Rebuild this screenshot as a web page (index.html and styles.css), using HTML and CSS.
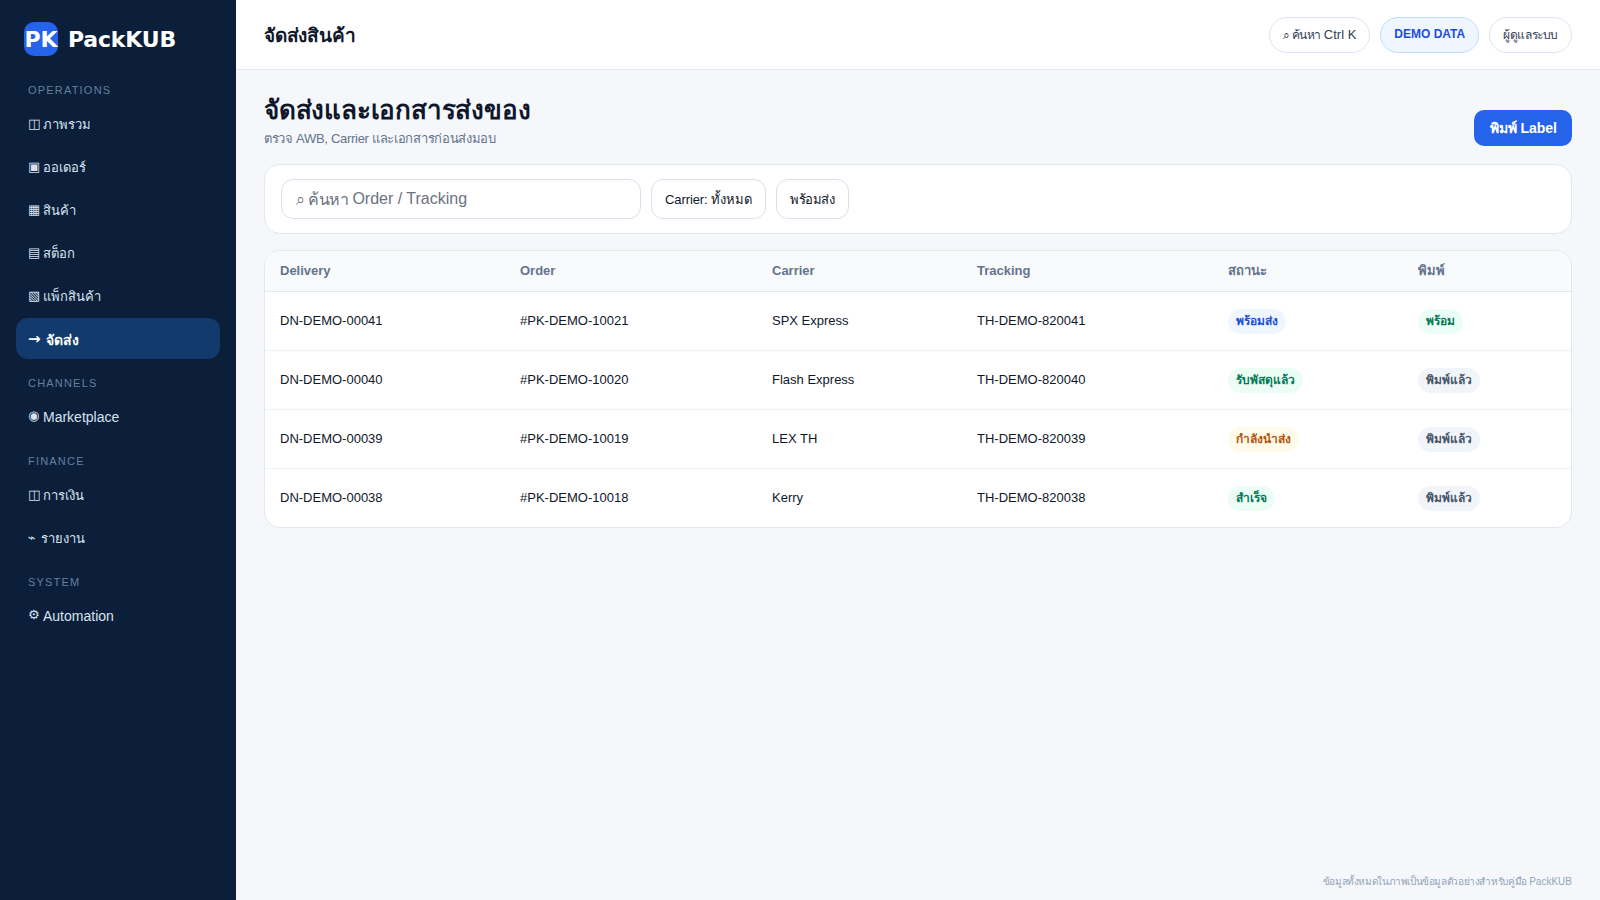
FILE: index.html
```html
<!DOCTYPE html>
<html lang="th">

<head>
  <meta charset="UTF-8">
  <meta name="viewport" content="width=device-width, initial-scale=1.0">
  <title>PackKUB - จัดส่งสินค้า</title>
  <link rel="stylesheet" href="styles.css">
</head>

<body>
  <div class="app">
    <aside class="sidebar">
      <div class="brand">
        <span class="brand-mark">PK</span>
        <span class="brand-name">PackKUB</span>
      </div>
      <div class="nav-label">OPERATIONS</div>
      <a class="nav-item"><span class="nav-icon">◫</span>ภาพรวม</a>
      <a class="nav-item"><span class="nav-icon">▣</span>ออเดอร์</a>
      <a class="nav-item"><span class="nav-icon">▦</span>สินค้า</a>
      <a class="nav-item"><span class="nav-icon">▤</span>สต็อก</a>
      <a class="nav-item"><span class="nav-icon">▧</span>แพ็กสินค้า</a>
      <a class="nav-item active"><span class="nav-icon">→</span>จัดส่ง</a>
      <div class="nav-label">CHANNELS</div>
      <a class="nav-item latin"><span class="nav-icon">◉</span>Marketplace</a>
      <div class="nav-label">FINANCE</div>
      <a class="nav-item"><span class="nav-icon">◫</span>การเงิน</a>
      <a class="nav-item"><span class="nav-icon small">⌁</span>รายงาน</a>
      <div class="nav-label">SYSTEM</div>
      <a class="nav-item latin"><span class="nav-icon">⚙</span>Automation</a>
    </aside>

    <div class="main">
      <header class="topbar">
        <div class="topbar-title">จัดส่งสินค้า</div>
        <div class="topbar-actions">
          <span class="pill search-pill">⌕ ค้นหา <span class="pill-latin">Ctrl K</span></span>
          <span class="pill demo">DEMO DATA</span>
          <span class="pill tight">ผู้ดูแลระบบ</span>
        </div>
      </header>

      <main class="content">
        <div class="page-head">
          <div>
            <h1>จัดส่งและเอกสารส่งของ</h1>
            <p>ตรวจ AWB, Carrier และเอกสารก่อนส่งมอบ</p>
          </div>
          <button class="btn-primary">พิมพ์ Label</button>
        </div>

        <div class="card filters">
          <div class="search"><span class="search-th">⌕ ค้นหา </span>Order / Tracking</div>
          <div class="filter">Carrier: ทั้งหมด</div>
          <div class="filter tight">พร้อมส่ง</div>
        </div>

        <div class="card table-card">
          <table>
            <thead>
              <tr>
                <th class="col-delivery">Delivery</th>
                <th class="col-order">Order</th>
                <th class="col-carrier">Carrier</th>
                <th class="col-tracking">Tracking</th>
                <th class="col-status">สถานะ</th>
                <th>พิมพ์</th>
              </tr>
            </thead>
            <tbody>
              <tr>
                <td>DN-DEMO-00041</td>
                <td>#PK-DEMO-10021</td>
                <td>SPX Express</td>
                <td>TH-DEMO-820041</td>
                <td><span class="badge blue">พร้อมส่ง</span></td>
                <td><span class="badge green">พร้อม</span></td>
              </tr>
              <tr>
                <td>DN-DEMO-00040</td>
                <td>#PK-DEMO-10020</td>
                <td>Flash Express</td>
                <td>TH-DEMO-820040</td>
                <td><span class="badge green">รับพัสดุแล้ว</span></td>
                <td><span class="badge gray">พิมพ์แล้ว</span></td>
              </tr>
              <tr>
                <td>DN-DEMO-00039</td>
                <td>#PK-DEMO-10019</td>
                <td>LEX TH</td>
                <td>TH-DEMO-820039</td>
                <td><span class="badge amber">กำลังนำส่ง</span></td>
                <td><span class="badge gray">พิมพ์แล้ว</span></td>
              </tr>
              <tr>
                <td>DN-DEMO-00038</td>
                <td>#PK-DEMO-10018</td>
                <td>Kerry</td>
                <td>TH-DEMO-820038</td>
                <td><span class="badge green">สำเร็จ</span></td>
                <td><span class="badge gray">พิมพ์แล้ว</span></td>
              </tr>
            </tbody>
          </table>
        </div>

        <div class="footnote">ข้อมูลทั้งหมดในภาพเป็นข้อมูลตัวอย่างสำหรับคู่มือ <span class="footnote-brand">PackKUB</span></div>
      </main>
    </div>
  </div>
</body>

</html>
```

FILE: styles.css
```css
* {
  box-sizing: border-box;
}

body {
  margin: 0;
  height: 100vh;
  overflow: hidden;
  background-color: #f5f7fb;
  color: #0f172a;
  font-family: "Liberation Sans", "Noto Sans", sans-serif;
  font-size: 14px;
}

.app {
  display: flex;
  height: 100vh;
}

.sidebar {
  width: 236px;
  flex-shrink: 0;
  background-color: #0b1f3a;
  padding: 22px 16px;
}

.brand {
  display: flex;
  align-items: center;
  gap: 10px;
  padding: 0 8px;
  margin-bottom: 27px;
}

.brand-mark {
  width: 34px;
  height: 34px;
  border-radius: 10px;
  background-color: #2563eb;
  color: #fff;
  font-family: "DejaVu Sans", sans-serif;
  font-weight: 700;
  font-size: 22px;
  display: flex;
  align-items: center;
  justify-content: center;
}

.brand-name {
  color: #fff;
  font-family: "DejaVu Sans", sans-serif;
  font-size: 22px;
  font-weight: 700;
  letter-spacing: -0.2px;
}

.nav-label {
  color: #64809f;
  font-size: 11px;
  letter-spacing: 1.2px;
  padding: 0 12px;
  margin: 17px 0 6px;
  line-height: 14px;
}

.brand + .nav-label {
  margin-top: 0;
}

.nav-item {
  display: flex;
  align-items: center;
  height: 41px;
  margin-bottom: 2px;
  padding: 2px 12px 0;
  border-radius: 12px;
  color: #d7e2f0;
  font-size: 13px;
}

.nav-item.latin {
  padding-top: 0;
  font-size: 14px;
}

.nav-icon {
  font-family: "DejaVu Sans", sans-serif;
  font-size: 13px;
  width: 15px;
  flex-shrink: 0;
  padding-bottom: 2px;
}

.nav-icon.small {
  width: 13px;
}

.nav-item.active {
  background-color: #123a6d;
  color: #fff;
  font-size: 14px;
  font-weight: 700;
}

.nav-item.active .nav-icon {
  font-size: 15px;
  width: 18px;
}

.main {
  flex: 1;
  display: flex;
  flex-direction: column;
  min-width: 0;
}

.topbar {
  height: 70px;
  flex-shrink: 0;
  background-color: #fff;
  border-bottom: 1px solid #e2e8f0;
  padding: 0 28px;
  display: flex;
  align-items: center;
  justify-content: space-between;
}

.topbar-title {
  font-size: 19px;
  font-weight: 700;
  letter-spacing: -0.2px;
  padding-top: 1px;
}

.topbar-actions {
  display: flex;
  gap: 10px;
}

.pill {
  height: 36px;
  padding: 0 13px;
  border: 1px solid #dbe4f0;
  border-radius: 18px;
  background-color: #fff;
  color: #334155;
  font-size: 12px;
  display: flex;
  align-items: center;
  white-space: pre;
}

.pill-latin {
  font-size: 13px;
  letter-spacing: 0;
}

.pill.search-pill {
  letter-spacing: -0.5px;
}

.pill.tight {
  letter-spacing: -0.4px;
}

.pill.demo {
  background-color: #eff6ff;
  border-color: #bfdbfe;
  color: #1d4ed8;
  font-weight: 700;
  padding: 0 13px 2px;
}

.content {
  flex: 1;
  padding: 24px 28px 0;
  display: flex;
  flex-direction: column;
}

.page-head {
  display: flex;
  align-items: flex-end;
  justify-content: space-between;
  margin-bottom: 18px;
}

.page-head h1 {
  margin: 0;
  font-size: 26px;
  line-height: 32px;
  letter-spacing: -0.2px;
  font-weight: 800;
}

.page-head p {
  margin: 5px 0 0;
  font-size: 13px;
  line-height: 15px;
  letter-spacing: -0.3px;
  color: #64748b;
}

.btn-primary {
  height: 36px;
  padding: 0 15px 0 16px;
  border: 0;
  border-radius: 10px;
  background-color: #2563eb;
  color: #fff;
  font-family: inherit;
  font-size: 14px;
  font-weight: 700;
}

.card {
  background-color: #fff;
  border: 1px solid #e2e8f0;
  border-radius: 16px;
}

.filters {
  height: 70px;
  padding: 15px 16px;
  display: flex;
  align-items: center;
  gap: 10px;
  margin-bottom: 16px;
}

.search {
  width: 360px;
  height: 40px;
  padding: 0 14px;
  border: 1px solid #d7e0ec;
  border-radius: 12px;
  color: #6b7280;
  font-size: 16px;
  display: flex;
  align-items: center;
  white-space: pre;
}

.search-th {
  letter-spacing: -0.5px;
}

.filter {
  height: 40px;
  padding: 0 13px;
  border: 1px solid #d7e0ec;
  border-radius: 12px;
  font-size: 13px;
  letter-spacing: -0.1px;
  color: #0f172a;
  display: flex;
  align-items: center;
}

.filter.tight {
  padding: 0 13.5px;
  letter-spacing: -0.4px;
}

.table-card {
  overflow: hidden;
}

table {
  width: 100%;
  border-collapse: collapse;
  font-size: 13px;
}

th {
  height: 40px;
  padding: 0 15px;
  text-align: left;
  font-size: 13px;
  font-weight: 700;
  color: #64748b;
  background-color: #f8fafc;
  border-bottom: 1px solid #e2e8f0;
}

td {
  height: 59px;
  padding: 0 15px;
  border-bottom: 1px solid #eef2f7;
}

tbody tr:last-child td {
  border-bottom: 0;
}

.col-delivery {
  width: 240px;
}

.col-order {
  width: 252px;
}

.col-carrier {
  width: 205px;
}

.col-tracking {
  width: 251px;
}

.col-status {
  width: 190px;
}

.badge {
  display: inline-block;
  vertical-align: middle;
  margin-top: 2px;
  padding: 4px 8px;
  border-radius: 13px;
  font-size: 12px;
  font-weight: 700;
  line-height: 17px;
}

.badge.blue {
  background-color: #eff6ff;
  color: #1d4ed8;
}

.badge.green {
  background-color: #ecfdf5;
  color: #047857;
}

.badge.amber {
  background-color: #fffbeb;
  color: #b45309;
}

.badge.gray {
  background-color: #f1f5f9;
  color: #475569;
}

.footnote {
  margin-top: auto;
  padding-bottom: 11px;
  text-align: right;
  font-size: 10px;
  letter-spacing: -0.38px;
  color: #94a3b8;
}

.footnote-brand {
  letter-spacing: 0;
}
```
